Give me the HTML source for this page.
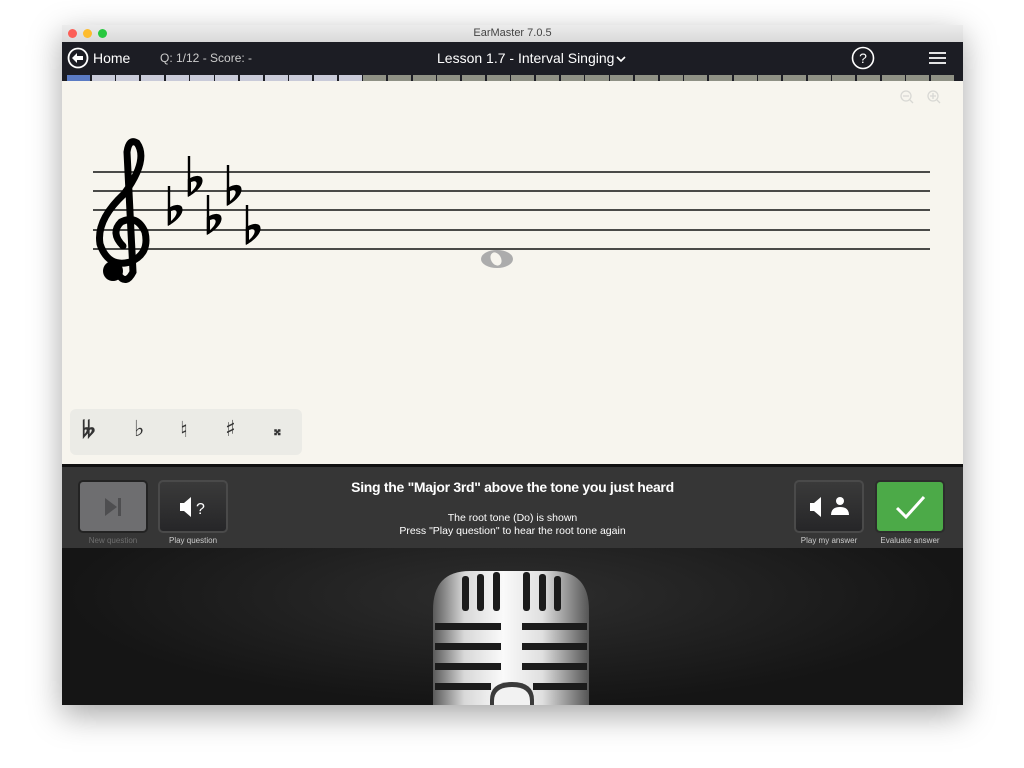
<!DOCTYPE html>
<html><head><meta charset="utf-8"><style>
*{margin:0;padding:0;box-sizing:border-box}
body{width:1024px;height:768px;background:#fff;position:relative;overflow:hidden;font-family:"Liberation Sans",sans-serif}
.win{position:absolute;left:62px;top:25px;width:901px;height:680px;box-shadow:0 10px 30px rgba(0,0,0,.35);background:#1c1d24;overflow:hidden}
.title{position:absolute;left:0;top:0;width:901px;height:17px;background:linear-gradient(#ececec,#d9d9d9);text-align:center;font-size:11px;color:#444;line-height:17px}
.dot{position:absolute;top:4px;width:9px;height:9px;border-radius:50%}
.tool{position:absolute;left:0;top:17px;width:901px;height:32px;background:#1c1d24;color:#fff}
.prog{position:absolute;left:5px;top:50px;display:flex;gap:1.6px}
.prog div{width:23.1px;height:6px;background:#8f9185}
.staff{position:absolute;left:0;top:56px;width:901px;height:383px;background:#f7f5ee}
.panel{position:absolute;left:0;top:439px;width:901px;height:84px;background:#363636;border-top:3px solid #111}
.btn{position:absolute;top:13px;width:70px;height:53px;border-radius:5px;border:2px solid #232323}
.lbl{position:absolute;top:69px;width:90px;text-align:center;font-size:8px;color:#ccc}
.mic{position:absolute;left:0;top:523px;width:901px;height:157px;background:radial-gradient(ellipse at 50% 30%,#2e2e2e,#151515 70%)}
</style></head><body>
<div class="win">
 <div class="title">EarMaster 7.0.5
  <div class="dot" style="left:6px;background:#fc5f57"></div>
  <div class="dot" style="left:21px;background:#fdbc2e"></div>
  <div class="dot" style="left:36px;background:#28c840"></div>
 </div>
 <div class="tool">
  <svg style="position:absolute;left:5px;top:5px" width="22" height="22" viewBox="0 0 22 22"><circle cx="11" cy="11" r="9.5" fill="none" stroke="#fff" stroke-width="1.8"/><path d="M5 11 L10 6 L10 9 L16 9 L16 13 L10 13 L10 16 Z" fill="#fff"/></svg>
  <span style="position:absolute;left:31px;top:8px;font-size:14px">Home</span>
  <span style="position:absolute;left:98px;top:9px;font-size:12px;color:#ccc">Q: 1/12 - Score: -</span>
  <span style="position:absolute;left:375px;top:8px;font-size:14px">Lesson 1.7 - Interval Singing</span>
  <svg style="position:absolute;left:554px;top:14px" width="10" height="7"><path d="M1 1 L5 5 L9 1" stroke="#fff" stroke-width="1.6" fill="none"/></svg>
  <svg style="position:absolute;left:789px;top:4px" width="24" height="24" viewBox="0 0 24 24"><circle cx="12" cy="12" r="10.5" fill="none" stroke="#fff" stroke-width="1.6"/><text x="12" y="17" font-size="14" fill="#fff" text-anchor="middle" font-family="Liberation Sans">?</text></svg>
  <svg style="position:absolute;left:867px;top:9px" width="17" height="14"><path d="M0 2h17M0 7h17M0 12h17" stroke="#fff" stroke-width="1.8"/></svg>
 </div>
 <div class="prog">
  <div style="background:#5b7bc4"></div><div style="background:#c9cbd9"></div><div style="background:#c9cbd9"></div><div style="background:#c9cbd9"></div><div style="background:#c9cbd9"></div><div style="background:#c9cbd9"></div><div style="background:#c9cbd9"></div><div style="background:#c9cbd9"></div><div style="background:#c9cbd9"></div><div style="background:#c9cbd9"></div><div style="background:#c9cbd9"></div><div style="background:#c9cbd9"></div>
  <div></div><div></div><div></div><div></div><div></div><div></div><div></div><div></div><div></div><div></div><div></div><div></div><div></div><div></div><div></div><div></div><div></div><div></div><div></div><div></div><div></div><div></div><div></div><div></div>
 </div>
 <div class="staff">
  <svg width="901" height="383" style="position:absolute;left:0;top:0">
   <g transform="translate(-62,-81)">
    <g stroke="#111" stroke-width="1.6"><path d="M93 172H930M93 191H930M93 210H930M93 230H930M93 249H930"/></g>
    <g fill="none" stroke="#000" stroke-width="7" stroke-linecap="round">
     <path d="M118 274 Q126 286 133 272 L127 152 Q129 138 137 143 Q149 160 124 194 Q96 220 100 244 Q108 268 130 262 Q150 254 145 232 Q137 214 121 222 Q110 233 123 246"/>
    </g>
    <circle cx="113" cy="271" r="10" fill="#000"/>
    <g fill="#000" stroke="#000" stroke-width="2.4">
     <path d="M169 186V225" /><path d="M169 224C186 214 185 200 169 209Z"/>
     <path d="M189 156V196"/><path d="M189 195C206 185 205 171 189 180Z"/>
     <path d="M208 195V234"/><path d="M208 233C225 223 224 209 208 218Z"/>
     <path d="M228 165V205"/><path d="M228 204C245 194 244 180 228 189Z"/>
     <path d="M247 205V244"/><path d="M247 243C264 233 263 219 247 228Z"/>
    </g>
    <g fill="#f7f5ee"><path d="M171 221C179 214 178 208 171 211Z"/><path d="M191 192C199 185 198 179 191 182Z"/><path d="M210 230C218 223 217 217 210 220Z"/><path d="M230 201C238 194 237 188 230 191Z"/><path d="M249 240C257 233 256 227 249 230Z"/></g>
    <ellipse cx="497" cy="259" rx="16" ry="9" fill="#acacac"/>
    <ellipse cx="496" cy="259" rx="5" ry="7" fill="#f7f5ee" transform="rotate(-30 496 259)"/>
    <g fill="none" stroke="#d8d8d4" stroke-width="1.3"><circle cx="906" cy="96" r="5"/><path d="M903 96h6M910 100l3 3"/><circle cx="933" cy="96" r="5"/><path d="M930 96h6M933 93v6M937 100l3 3"/></g>
   </g>
  </svg>
  <div style="position:absolute;left:8px;top:328px;width:232px;height:46px;background:#ebebe6;border-radius:6px;font-family:'DejaVu Sans',sans-serif;color:#333;font-size:22px;font-weight:bold">
   <span style="position:absolute;left:12px;top:9px">𝄫</span>
   <span style="position:absolute;left:64px;top:8px">♭</span>
   <span style="position:absolute;left:110px;top:9px">♮</span>
   <span style="position:absolute;left:155px;top:8px">♯</span>
   <span style="position:absolute;left:204px;top:12px;font-size:15px">𝄪</span>
  </div>
 </div>
 <div class="panel">
  <div class="btn" style="left:16px;background:#6e6e70"><svg width="66" height="49"><path d="M25 16L37 25L25 34Z" fill="#4e4e50"/><rect x="38" y="16" width="3" height="18" fill="#4e4e50"/></svg></div>
  <div class="lbl" style="left:6px;color:#6e6e6e">New question</div>
  <div class="btn" style="left:96px;background:linear-gradient(#3a3a3a,#262628);border-color:#4a4a4a"><svg width="66" height="49"><path d="M20 21h4l7-6v20l-7-6h-4z" fill="#fff"/><text x="36" y="32" fill="#fff" font-size="16" font-family="Liberation Sans">?</text></svg></div>
  <div class="lbl" style="left:86px">Play question</div>
  <div style="position:absolute;left:0;width:901px;top:12px;text-align:center;color:#fff;font-size:14px;font-weight:bold;letter-spacing:-0.3px">Sing the "Major 3rd" above the tone you just heard</div>
  <div style="position:absolute;left:0;width:901px;top:45px;text-align:center;color:#fff;font-size:10.5px;line-height:13px">The root tone (Do) is shown<br>Press "Play question" to hear the root tone again</div>
  <div class="btn" style="left:732px;background:linear-gradient(#3a3a3a,#262628);border-color:#4a4a4a"><svg width="66" height="49"><path d="M14 21h4l7-6v20l-7-6h-4z" fill="#fff"/><circle cx="44" cy="19" r="4" fill="#fff"/><path d="M35 33q0-8 9-8q9 0 9 8z" fill="#fff"/></svg></div>
  <div class="lbl" style="left:722px">Play my answer</div>
  <div class="btn" style="left:813px;background:#4caa48;border-color:#2c2c2c"><svg width="66" height="49"><path d="M20 26L29 35L47 15" stroke="#fff" stroke-width="3" fill="none"/></svg></div>
  <div class="lbl" style="left:803px">Evaluate answer</div>
 </div>
 <div class="mic">
  <svg width="901" height="157">
   <defs><linearGradient id="m" x1="0" x2="1"><stop offset="0" stop-color="#5a5a5a"/><stop offset=".2" stop-color="#d8d8d8"/><stop offset=".45" stop-color="#fafafa"/><stop offset=".7" stop-color="#e0e0e0"/><stop offset="1" stop-color="#555"/></linearGradient></defs>
   <g transform="translate(-62,-548)">
    <path d="M433 705V610Q433 571 470 571H552Q589 571 589 610V705Z" fill="url(#m)"/>
    <g fill="#1b1b1b"><rect x="462" y="576" width="7" height="35" rx="3"/><rect x="477" y="574" width="7" height="37" rx="3"/><rect x="493" y="572" width="7" height="39" rx="3"/><rect x="523" y="572" width="7" height="39" rx="3"/><rect x="539" y="574" width="7" height="37" rx="3"/><rect x="554" y="576" width="7" height="35" rx="3"/>
    <rect x="435" y="623" width="66" height="7"/><rect x="522" y="623" width="65" height="7"/><rect x="435" y="643" width="66" height="7"/><rect x="522" y="643" width="65" height="7"/><rect x="435" y="663" width="66" height="7"/><rect x="522" y="663" width="65" height="7"/><rect x="435" y="683" width="56" height="7"/><rect x="533" y="683" width="54" height="7"/></g>
    <path d="M490 705V700Q490 682 512 682Q534 682 534 700V705Z" fill="#3a3a3a"/>
    <path d="M494 705V701Q494 687 512 687Q530 687 530 701V705Z" fill="#f2f2f2"/>
   </g>
  </svg>
 </div>
</div>
</body></html>
